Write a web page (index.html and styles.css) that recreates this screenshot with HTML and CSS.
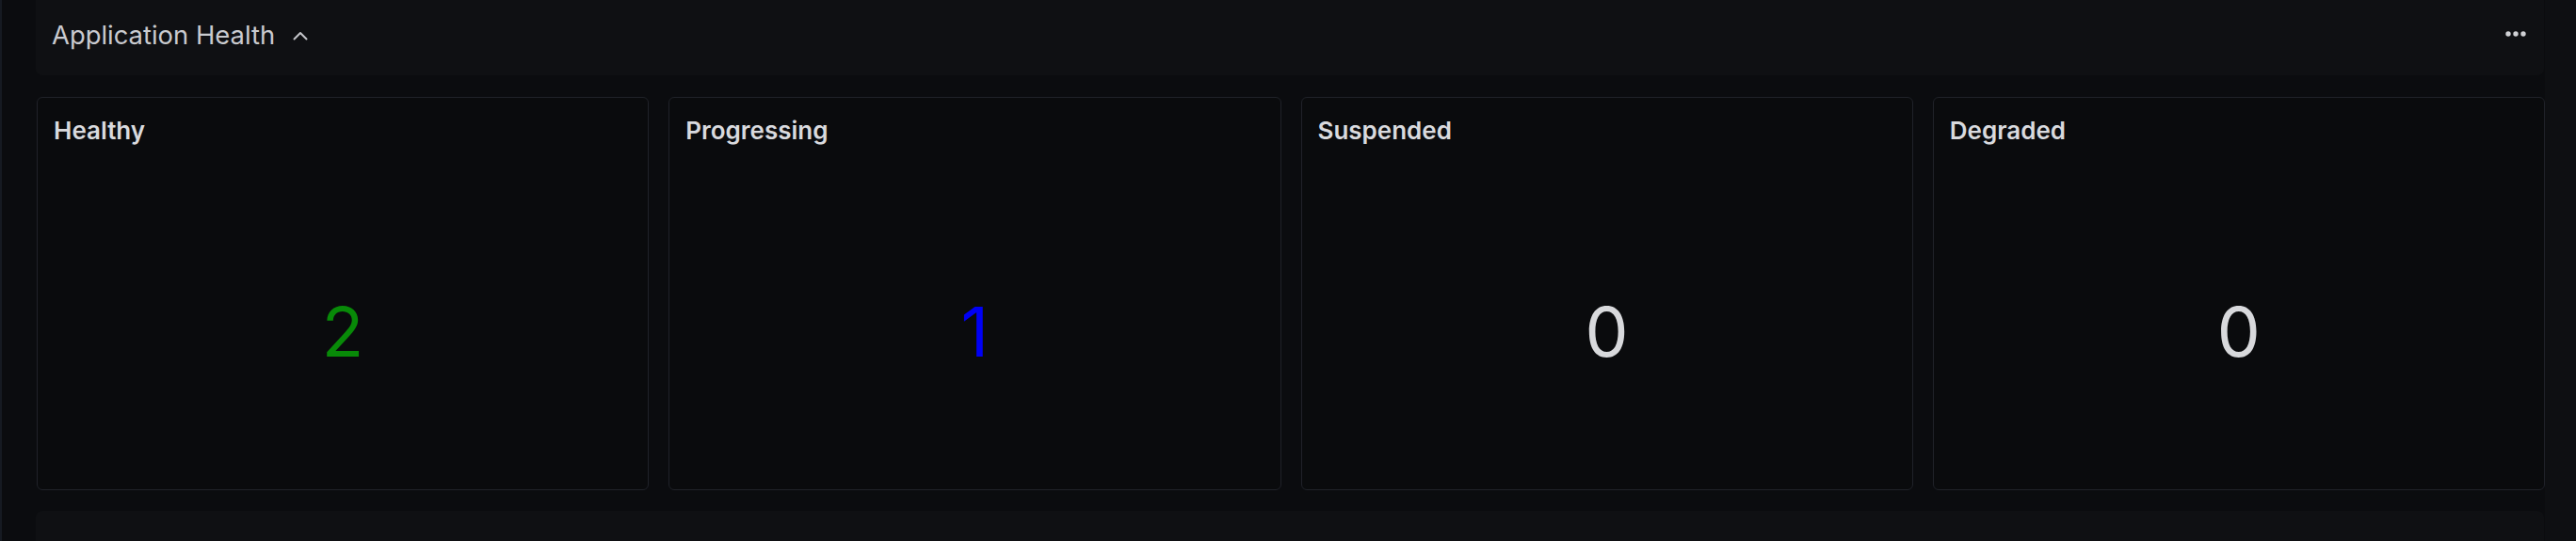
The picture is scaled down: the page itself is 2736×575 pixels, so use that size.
FILE: index.html
```html
<!DOCTYPE html>
<html lang="en">
<head>
<meta charset="utf-8">
<title>Application Health</title>
<link rel="stylesheet" href="styles.css">
</head>
<body>
<div class="page">
  <div class="edge"></div>
  <main class="main">
    <header class="row-header">
      <div class="row-title">
        <span>Application Health</span>
        <svg class="chevron" width="16" height="10" viewBox="0 0 16 10" aria-hidden="true">
          <polyline points="1.5,8.5 8,2 14.5,8.5" fill="none" stroke="#c4c5ca" stroke-width="2" stroke-linecap="round" stroke-linejoin="round"/>
        </svg>
      </div>
      <svg class="dots" width="22" height="6" viewBox="0 0 22 6" aria-hidden="true">
        <circle cx="3" cy="3" r="2.7" fill="#cfd0d4"/>
        <circle cx="11" cy="3" r="2.7" fill="#cfd0d4"/>
        <circle cx="19" cy="3" r="2.7" fill="#cfd0d4"/>
      </svg>
    </header>
    <section class="cards">
      <div class="card">
        <div class="card-title">Healthy</div>
        <div class="card-body"><span class="value value-green">2</span></div>
      </div>
      <div class="card">
        <div class="card-title">Progressing</div>
        <div class="card-body"><span class="value value-blue">1</span></div>
      </div>
      <div class="card">
        <div class="card-title">Suspended</div>
        <div class="card-body"><span class="value value-grey">0</span></div>
      </div>
      <div class="card">
        <div class="card-title">Degraded</div>
        <div class="card-body"><span class="value value-grey">0</span></div>
      </div>
    </section>
    <div class="next-row"></div>
  </main>
  <div class="gutter"></div>
</div>
</body>
</html>
```

FILE: styles.css
```css
html, body {
  margin: 0;
  padding: 0;
  height: 100%;
  overflow: hidden;
}

body {
  background: #0b0c0f;
  font-family: Inter, "Noto Sans", "Liberation Sans", sans-serif;
}

.page {
  display: flex;
  width: 2736px;
  height: 575px;
  overflow: hidden;
}

.edge {
  width: 2px;
  flex: none;
  background: #161a22;
}

.main {
  flex: 1;
  display: flex;
  flex-direction: column;
  padding-left: 36px;
  background: #0b0c0f;
  overflow: hidden;
}

.main > * {
  flex-shrink: 0;
}

.gutter {
  width: 33px;
  flex: none;
  background: #0e0f12;
}

.row-header {
  height: 80px;
  box-sizing: border-box;
  padding: 0 19px 0 17px;
  display: flex;
  align-items: center;
  justify-content: space-between;
  background: #0f1013;
  border-radius: 0 0 7px 7px;
  margin-right: 1px;
}

.row-title {
  display: flex;
  align-items: center;
  color: #c9cacf;
  font-size: 27.4px;
  font-weight: 400;
  line-height: 40px;
  padding-bottom: 6px;
}

.chevron {
  margin-left: 19px;
  margin-top: 1px;
}

.dots {
  margin-bottom: 8px;
}

.cards {
  display: grid;
  grid-template-columns: repeat(4, 1fr);
  gap: 21px;
  margin-top: 23px;
  margin-left: 1px;
  height: 418px;
}

.card {
  display: flex;
  flex-direction: column;
  box-sizing: border-box;
  border: 1px solid #202229;
  border-radius: 6px;
  background: #0a0b0d;
  padding: 15px 16px 0 17px;
}

.card-title {
  color: #d9dade;
  font-size: 26px;
  font-weight: 600;
  line-height: 39px;
}

.card-body {
  flex: 1;
  display: flex;
  align-items: center;
  justify-content: center;
  padding-top: 27px;
  padding-right: 1px;
}

.value {
  font-size: 73px;
  font-weight: 400;
  line-height: 1;
}

.value-green { color: #088a08; }
.value-blue { color: #0000f5; }
.value-grey { color: #d8d9dc; }

.next-row {
  margin-top: 22px;
  height: 60px;
  background: #0f1013;
  border-radius: 7px 7px 0 0;
  margin-right: 1px;
}
```
